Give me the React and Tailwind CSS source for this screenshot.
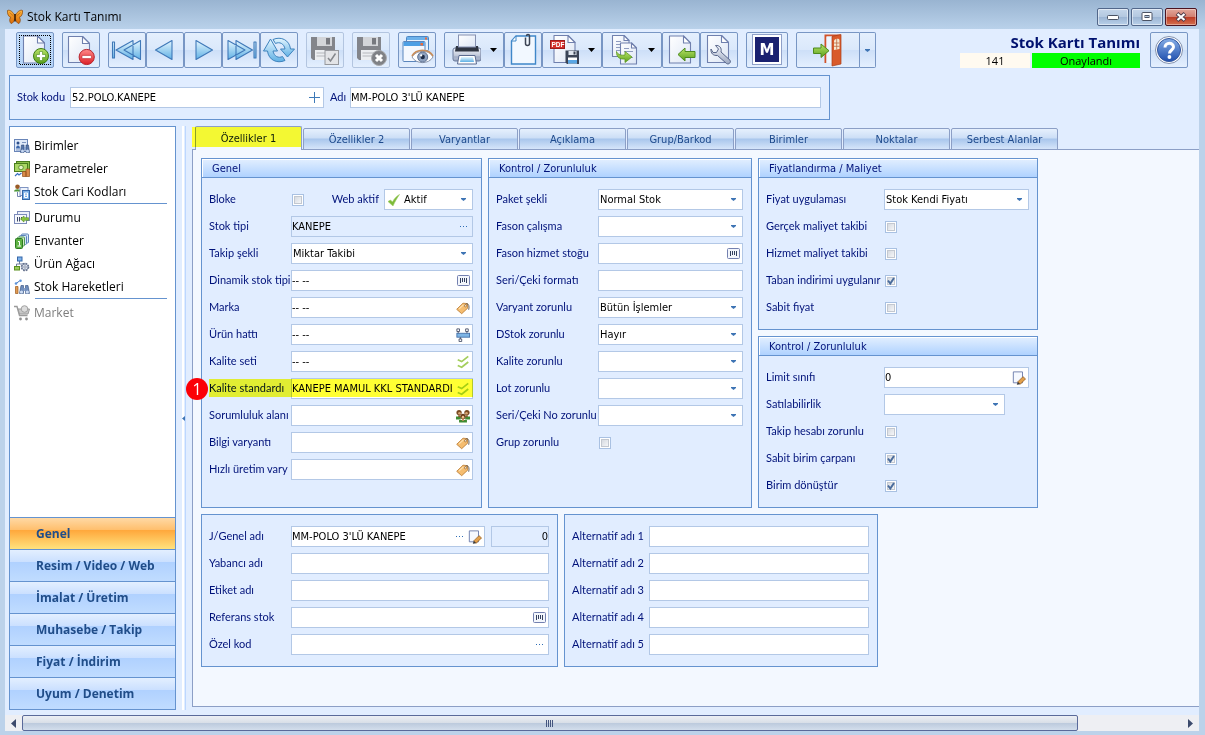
import React, { useId, useState } from 'react';

const tabs = [
  'Özellikler 1',
  'Özellikler 2',
  'Varyantlar',
  'Açıklama',
  'Grup/Barkod',
  'Birimler',
  'Noktalar',
  'Serbest Alanlar',
];

const sections = [
  'Genel',
  'Resim / Video / Web',
  'İmalat / Üretim',
  'Muhasebe / Takip',
  'Fiyat / İndirim',
  'Uyum / Denetim',
];

/* ---------- toolbar drawings ---------- */

const Gradients = () => (
  <svg width="0" height="0" className="absolute" aria-hidden="true">
    <defs>
      <linearGradient id="page" x1="0" y1="0" x2="1" y2="1">
        <stop offset="0" stopColor="#ffffff" />
        <stop offset="1" stopColor="#dde6f5" />
      </linearGradient>
      <linearGradient id="sky" x1="0" y1="0" x2="0" y2="1">
        <stop offset="0" stopColor="#e4f6ff" />
        <stop offset="1" stopColor="#5fb0e4" />
      </linearGradient>
      <linearGradient id="green" x1="0" y1="0" x2="0" y2="1">
        <stop offset="0" stopColor="#b9e468" />
        <stop offset="1" stopColor="#5aa01c" />
      </linearGradient>
      <linearGradient id="red" x1="0" y1="0" x2="0" y2="1">
        <stop offset="0" stopColor="#ff8a8a" />
        <stop offset="1" stopColor="#dc1f27" />
      </linearGradient>
      <linearGradient id="steel" x1="0" y1="0" x2="0" y2="1">
        <stop offset="0" stopColor="#f4f6fb" />
        <stop offset="1" stopColor="#9aa6c0" />
      </linearGradient>
      <linearGradient id="help" x1="0" y1="0" x2="0" y2="1">
        <stop offset="0" stopColor="#86aee6" />
        <stop offset="1" stopColor="#1f4fae" />
      </linearGradient>
      <linearGradient id="wing" x1="0" y1="0" x2="0" y2="1">
        <stop offset="0" stopColor="#ffb43a" />
        <stop offset="1" stopColor="#d96a07" />
      </linearGradient>
    </defs>
  </svg>
);

const Art = ({ w = 36, children }) => (
  <svg width={w} height="34" viewBox={`1 1 ${w} 34`} className="block shrink-0" aria-hidden="true">
    {children}
  </svg>
);

const Page = ({ x, y, w, h, stroke = '#7080ae', fold = 7 }) => (
  <g stroke={stroke} strokeWidth="1.1" strokeLinejoin="round">
    <path d={`M${x} ${y}H${x + w - fold}L${x + w} ${y + fold}V${y + h}H${x}Z`} fill="url(#page)" />
    <path d={`M${x + w - fold} ${y}V${y + fold}H${x + w}Z`} fill="#fff" />
  </g>
);

const NewIcon = () => (
  <Art>
    <Page x={7.5} y={4} w={21} h={27} />
    <circle cx="25" cy="24" r="7.5" fill="url(#green)" stroke="#3d7d12" />
    <path d="M23.500 19.500h3v3h3v3h-3v3h-3v-3h-3v-3h3z" fill="#fff" stroke="#4c8c1c" strokeWidth=".6" />
    <rect x="3.500" y="3.500" width="31" height="29" fill="none" stroke="#000" strokeDasharray="1 1" strokeDashoffset=".5" shapeRendering="crispEdges" />
  </Art>
);

const DeleteIcon = () => (
  <Art>
    <Page x={6.5} y={4.5} w={21} h={26} />
    <circle cx="24.700" cy="25" r="7.600" fill="url(#red)" stroke="#b8232b" />
    <rect x="20" y="23.400" width="9.400" height="3.200" rx=".6" fill="#fff" stroke="#b8232b" strokeWidth=".6" />
  </Art>
);

const NavIcon = ({ d }) => (
  <Art>
    <path d={d} fill="url(#sky)" stroke="#3f78b8" strokeWidth="1.1" strokeLinejoin="round" />
  </Art>
);

const RefreshIcon = () => (
  <Art>
    <g fill="url(#sky)" stroke="#3f83bd" strokeWidth="1" strokeLinejoin="round">
      <path d="M13 7.500C21 4 29.500 8 30.500 17H34.500L27.500 25L20.500 17H25C24 11.500 19.500 9.500 15.500 11.500Z" />
      <path d="M25 28.500C17 32 8.500 28 7.500 19H3.500L10.500 7L17.500 19H13C14 24.500 18.500 26.500 22.500 24.500Z" />
    </g>
  </Art>
);

const Disk = () => (
  <g>
    <path d="M5 5H29V28H7L5 26Z" fill="#83858b" />
    <path d="M11 5H26V14H11Z" fill="#d3d5d9" />
    <path d="M20 6H24V12.500H20Z" fill="#77797f" />
    <path d="M9 18H26V28H9Z" fill="#eceef1" />
    <path d="M10.500 21H24M10.500 24H24" stroke="#b5b7bc" />
  </g>
);

const SaveIcon = () => (
  <Art>
    <Disk />
    <rect x="19" y="18.500" width="13.500" height="14" fill="#e3e4e7" stroke="#96989d" />
    <path d="M22 26L24.500 29L29.500 21.500" fill="none" stroke="#85878c" strokeWidth="1.500" />
  </Art>
);

const SaveCloseIcon = () => (
  <Art>
    <Disk />
    <circle cx="27" cy="26" r="7.500" fill="#7f8186" stroke="#a9abaf" />
    <path d="M24 23L30 29M30 23L24 29" stroke="#fff" strokeWidth="3" />
  </Art>
);

const PreviewIcon = () => (
  <Art>
    <rect x="8.500" y="4.500" width="22" height="14" rx="1" fill="#e8f1fc" stroke="#4b86c4" />
    <rect x="9" y="5" width="21" height="3" fill="#6db1ea" />
    <rect x="27" y="5.500" width="2" height="2" fill="#ee6b3b" />
    <rect x="5" y="9.500" width="22" height="20" rx="1" fill="#f4f8fe" stroke="#5b86bc" />
    <rect x="5.500" y="10" width="21" height="4" fill="#4d9fe4" />
    <rect x="22.500" y="11" width="2.500" height="2.500" fill="#ee6b3b" />
    <path d="M14 25C18 18 31 17 35 25C31 32.500 18 32.500 14 25Z" fill="#fff" stroke="#8c98ae" />
    <path d="M14 24C18 16.500 31 16.500 35 24" fill="none" stroke="#c88d5a" strokeWidth="1.600" />
    <circle cx="24.700" cy="25" r="5" fill="#8fa2bf" stroke="#5c7092" />
    <circle cx="24.700" cy="25" r="2.200" fill="#1c2b46" />
    <circle cx="23.200" cy="23.400" r="1.100" fill="#fff" />
  </Art>
);

const PrintIcon = () => (
  <Art>
    <rect x="9" y="16" width="28" height="13" rx="2" fill="url(#steel)" stroke="#6a7a9c" />
    <path d="M12 14H34L35 19.500H11Z" fill="#2f3542" />
    <rect x="14.500" y="3" width="17" height="12" fill="url(#page)" stroke="#8590b0" />
    <path d="M9.500 25H36.500" stroke="#9aa6c0" />
    <path d="M15 23.500H31L32.500 32H13.500Z" fill="#fff" stroke="#5b6b90" />
    <path d="M17 25H29L30 30H16Z" fill="url(#sky)" />
  </Art>
);

const ClipIcon = () => (
  <Art>
    <path d="M12 4H31.500V32H7.500V9Z" fill="#f2f8ff" stroke="#3f87c9" strokeWidth="1.400" />
    <path d="M12 4V9H7.500Z" fill="#fff" stroke="#3f87c9" />
    <path d="M21.500 5.500V11.500A2 2 0 0 0 25.500 11.500V4A1.500 1.500 0 0 0 22.500 4" fill="none" stroke="#3c4454" strokeWidth="1.500" />
  </Art>
);

const PdfIcon = () => (
  <Art>
    <Page x={12} y={3.5} w={21} h={27} />
    <rect x="8.500" y="8.500" width="14" height="8" fill="#d5302b" stroke="#9c1c1c" />
    <text x="9.500" y="15.200" fontSize="6.500" fontWeight="bold" fill="#fff" fontFamily="Liberation Sans, sans-serif">
      PDF
    </text>
    <path d="M23.500 18.500H37V32H25L23.500 30.500Z" fill="#3b4456" />
    <path d="M26.500 19H34.500V23H26.500Z" fill="#dfe5ee" />
    <path d="M31.500 19.500H33.500V22.500H31.500Z" fill="#3b4456" />
    <path d="M26 25.500H35V31.500H26Z" fill="#fff" />
    <path d="M26 28H35V31.500H26Z" fill="#5aa6e4" />
  </Art>
);

const CopyIcon = () => (
  <Art>
    <Page x={10.5} y={3.5} w={16.5} h={21} fold={5} />
    <path d="M14 9.500H19M14 12.500H23M14 15.500H22M14 18.500H20" stroke="#8e9bbf" />
    <Page x={18.5} y={11} w={16} h={21} fold={5} />
    <path d="M22 16.500H27M22 19.500H31M22 25.500H31" stroke="#8e9bbf" />
    <path d="M14.500 19.500C16 23 19 23.500 23 23V19.500L30 25L23 30.500V27C17 27.500 14.500 25 14.500 19.500Z" fill="url(#green)" stroke="#5b9720" strokeWidth=".8" />
  </Art>
);

const ImportIcon = () => (
  <Art>
    <Page x={7.5} y={4} w={21} h={27} />
    <path d="M16 22.500L23 16V19.500H33V25.500H23V29Z" fill="url(#green)" stroke="#4d8a1d" />
  </Art>
);

const ToolIcon = () => (
  <Art>
    <Page x={7.5} y={3.5} w={21} h={27} />
    <path
      d="M11 17C10.500 21 13 24 17.500 23.500L26.500 31.500C28.500 33 31.500 30.500 30 28.200L21 20C22 16 19.500 13 15.500 13.500L18.500 17L16.500 20.500L13 20.500Z"
      fill="url(#steel)"
      stroke="#58668a"
      strokeLinejoin="round"
    />
  </Art>
);

const MIcon = () => (
  <Art w={40}>
    <rect x="6.500" y="2.500" width="29" height="30" fill="#fff" stroke="#8fa0c8" />
    <rect x="9" y="5" width="24" height="25" fill="#1a2170" />
    <text x="21" y="23" fontSize="15" fontWeight="900" textAnchor="middle" fill="#fff" fontFamily="DejaVu Sans, sans-serif">
      M
    </text>
  </Art>
);

const ExitIcon = () => (
  <Art w={62}>
    <path d="M29.500 31V3.500H44" fill="none" stroke="#d2522a" strokeWidth="2" />
    <path d="M30.500 4.500H36V31H30.500Z" fill="#eef5ff" />
    <path d="M36 4.500L45 2.500V32L36 34Z" fill="#d95a2b" stroke="#a93c16" strokeWidth=".7" />
    <path d="M38 9C38.500 6.500 43 6 43.500 8V17L38 18Z" fill="#f6e7d0" />
    <path d="M40.700 7V17.500M38 11H43.500M38 14.300H43.500" stroke="#bb6a43" strokeWidth=".8" />
    <path d="M17.500 16H25V12L33 18.700L25 25.500V21.500H17.500Z" fill="url(#green)" stroke="#4d8a1d" />
  </Art>
);

const HelpIcon = () => (
  <Art>
    <circle cx="19" cy="18" r="13.500" fill="#fff" stroke="#8391ad" />
    <circle cx="19" cy="18" r="11.500" fill="url(#help)" stroke="#32569f" />
    <path d="M15 15.500C15 10 23.500 10 23.500 15C23.500 18 19.500 18 19.500 21.500" fill="none" stroke="#fff" strokeWidth="3" />
    <circle cx="19.400" cy="25" r="1.900" fill="#fff" />
  </Art>
);

/* ---------- small drawings ---------- */

const Small = ({ size = 16, children }) => (
  <svg width={size} height={size} viewBox="0 0 16 16" className="block shrink-0" aria-hidden="true">
    {children}
  </svg>
);

const Butterfly = () => (
  <svg width="16" height="16" viewBox="0 0 16 16" className="block" aria-hidden="true">
    <path
      d="M7.500 6C5.500 2 2 .5.500 1.500C0 4.500 1.500 8 4 8.500C2 9.500 2.500 13 4 14.500C6 14.500 7 12 7.500 10.500L8.500 10.500C9 12 10 14.500 12 14.500C13.500 13 14 9.500 12 8.500C14.500 8 16 4.500 15.500 1.500C14 .5 10.500 2 8.500 6Z"
      fill="url(#wing)"
      stroke="#8a4507"
      strokeWidth=".7"
    />
    <path d="M8 5V12.500" stroke="#3a1c04" strokeWidth="1.600" />
    <path d="M2.500 3.500L6.500 7M13.500 3.500L9.500 7" stroke="#a65a12" strokeWidth=".6" />
  </svg>
);

const BarcodeIcon = () => (
  <svg width="13" height="11" viewBox="0 0 13 11" className="block" aria-hidden="true">
    <rect x=".5" y=".5" width="12" height="10" rx="1" fill="#f3f6fc" stroke="#7481b0" />
    <path d="M3.500 3V8M5.500 3V7M7.500 3V7M9.500 3V8" stroke="#33405e" />
  </svg>
);

const TagIcon = () => (
  <Small size={14}>
    <path d="M.8 9.500L8 2.500L13 3L13.500 8L6.500 14.500Z" fill="#f5bd70" stroke="#b8752a" strokeWidth=".9" />
    <path d="M3.500 9L8.500 4.500" stroke="#fde3b4" strokeWidth="1.300" />
    <circle cx="10.800" cy="5.500" r="1.200" fill="#fff" stroke="#8a5518" strokeWidth=".7" />
    <path d="M11 4C13 1.500 16 4.500 14.500 10" fill="none" stroke="#55504c" />
  </Small>
);

const LineIcon = () => (
  <Small size={14}>
    <rect x="1" y="6" width="14.500" height="4.500" fill="#7db4e4" stroke="#416fa8" />
    <path d="M2.500 3V6M12.500 3V6M5 10.500V13" stroke="#454d66" />
    <path d="M1 1H4V4H1ZM11 1H14V4H11ZM3.500 12.500H6.500V15.500H3.500Z" fill="#fff" stroke="#454d66" />
  </Small>
);

const ChecksIcon = () => (
  <Small size={14}>
    <path d="M2 5.500L6.500 7.500L14 1.500M2 12L6.500 14L14 8" fill="none" stroke="#a4ce5c" strokeWidth="2" />
  </Small>
);

const PeopleIcon = () => (
  <Small size={14}>
    <path d="M0 8.500H5.500V12H0ZM10.500 8.500H16V12H10.500ZM3.500 12.500H12.500V15.500H3.500Z" fill="#3f8b32" />
    <circle cx="3.500" cy="4" r="3" fill="#7a4a22" />
    <circle cx="12.500" cy="4" r="3" fill="#7a4a22" />
    <path d="M2.500 7H5V9H2.500ZM11 7H13.500V9H11Z" fill="#8a5a30" />
    <circle cx="8" cy="8.500" r="3" fill="#6b3c18" />
    <path d="M6.800 11H9.200V13.500H6.800Z" fill="#c98f5c" />
    <circle cx="4" cy="4.800" r="1.500" fill="#d9a674" />
    <circle cx="12" cy="4.800" r="1.500" fill="#d9a674" />
    <circle cx="8" cy="9.300" r="1.500" fill="#edbf8e" />
  </Small>
);

const EditIcon = () => (
  <Small size={14}>
    <path d="M1.500 1H12V13.500H1.500Z" fill="#f6f9ff" stroke="#6576a8" />
    <path d="M6.500 12.500L12.500 6.500L15.500 9L9.500 15Z" fill="#e2a04c" stroke="#8e5619" strokeWidth=".8" />
    <path d="M6.500 12.500L9.500 15L5.500 15.800Z" fill="#3a3a3a" />
  </Small>
);

const DotsIcon = () => (
  <svg width="9" height="2" viewBox="0 0 9 2" className="block" aria-hidden="true">
    <path d="M1 0H2V1H1ZM4 0H5V1H4ZM7 0H8V1H7Z" fill="#2f6db5" />
  </svg>
);

const UnitsIcon = () => (
  <Small>
    <rect x=".5" y="1.500" width="13" height="12" fill="#dfe9f8" stroke="#6985b8" />
    <circle cx="4" cy="5" r="1.500" fill="#2d4f8a" />
    <path d="M2 10.500C2 6.500 6 6.500 6 10.500Z" fill="#3c66aa" />
    <path d="M8 4.500H12M2 12H6" stroke="#7d95c0" />
    <path d="M7.500 7H10V14.500H6.500ZM12 7H14.500L15.500 14.500H12Z" fill="#5877aa" stroke="#2f4a7a" strokeWidth=".6" />
    <path d="M10 9H12V12H10Z" fill="#8aa3cd" />
    <circle cx="8.500" cy="13" r="1.500" fill="#c6d7f2" />
    <circle cx="13.500" cy="13" r="1.500" fill="#c6d7f2" />
  </Small>
);

const MoneyIcon = () => (
  <Small>
    <rect x="2.500" y=".5" width="13" height="8" fill="#8cc04a" stroke="#4a7d1d" />
    <rect x=".5" y="2.500" width="13" height="8" fill="#a9d663" stroke="#4a7d1d" />
    <circle cx="7" cy="6.500" r="2.300" fill="#e4f3c6" stroke="#4a7d1d" strokeWidth=".8" />
    <path d="M1 15L3.500 12.500L5 14L7.500 12" fill="none" stroke="#3a6fc0" strokeWidth="1.200" />
    <path d="M8.500 10.500H12V15.500H8.500ZM12 8H15.500V15.500H12Z" fill="#d98b4a" stroke="#94501b" strokeWidth=".7" />
  </Small>
);

const CodesIcon = () => (
  <Small>
    <circle cx="3.500" cy="2.800" r="2.300" fill="#9a5b26" />
    <path d="M0 7.500C0 4.500 7 4.500 7 7.500Z" fill="#4d9738" />
    <path d="M3.500 8V12.500H7" fill="none" stroke="#7485b0" />
    <rect x="6" y="3.500" width="8" height="8" fill="#eef3fc" stroke="#7f94c2" />
    <rect x="8.500" y="6.500" width="7" height="9" fill="#7aaee6" stroke="#3467a8" />
    <path d="M10.500 9H13.500V13.500H10.500ZM10.500 11.200H13.500" fill="none" stroke="#fff" />
  </Small>
);

const StatusIcon = () => (
  <Small>
    <rect x="3.500" y="1.500" width="12" height="9" fill="#eef2fb" stroke="#7d8cba" />
    <rect x=".5" y="4.500" width="12" height="9" fill="#f6f8fd" stroke="#7d8cba" />
    <path d="M3.500 7V11.500M5.500 7V11.500M7.500 7V10" stroke="#3f4a66" />
    <path d="M6.500 9L10 6V7.700H14.500V10.300H10V12Z" fill="#8cc63f" stroke="#568f1b" strokeWidth=".6" />
  </Small>
);

const InventoryIcon = () => (
  <Small>
    <rect x="7.500" y="1" width="7" height="9" rx="1" fill="#d8e6f8" stroke="#5b83ba" />
    <rect x="5.500" y="2.500" width="7" height="9" rx="1" fill="#d8e6f8" stroke="#5b83ba" />
    <rect x="3.500" y="4" width="7" height="9" rx="1" fill="#d4ecc0" stroke="#4f9a58" />
    <rect x="1.500" y="5.500" width="7" height="10" rx="1" fill="#5fb344" stroke="#2c7a20" />
    <path d="M4 8.500H5.500V12.500M3.500 13H7" fill="none" stroke="#fff" />
  </Small>
);

const TreeIcon = () => (
  <Small>
    <path d="M5.500 5V8M2.500 11V8H11" fill="none" stroke="#6c7a9c" />
    <rect x="3.500" y="1" width="4.500" height="4" fill="#7fb2ea" stroke="#3566a8" />
    <rect x=".5" y="10.500" width="5" height="3.500" fill="#9ccc5a" stroke="#5a8f1f" />
    <circle cx="11" cy="11" r="3.300" fill="#cdd4e2" stroke="#66728e" strokeDasharray="1.600 1" strokeWidth="2" />
    <circle cx="11" cy="11" r="3" fill="#dde2ed" stroke="#66728e" strokeWidth=".7" />
    <circle cx="11" cy="11" r="1.200" fill="#fff" stroke="#66728e" strokeWidth=".7" />
  </Small>
);

const MovesIcon = () => (
  <Small>
    <path d="M2 4.500L5.500 2" fill="none" stroke="#4a7cc0" />
    <circle cx="2" cy="4.500" r="1.300" fill="#5c93da" />
    <circle cx="6.500" cy="1.800" r="1.300" fill="#5c93da" />
    <path d="M1.500 7.500H4V14.500H1.500Z" fill="#e09a52" stroke="#9c5a1b" strokeWidth=".7" />
    <path d="M7 6.500H9.500V14.500H5.500ZM11.500 6.500H14L15.500 14.500H11.500Z" fill="#6e8dbd" stroke="#2f4a7a" strokeWidth=".6" />
    <path d="M9.500 9H11.500V12H9.500Z" fill="#8aa3cd" />
    <circle cx="7.500" cy="13" r="1.600" fill="#cfdef5" />
    <circle cx="13.300" cy="13" r="1.600" fill="#cfdef5" />
  </Small>
);

const CartIcon = () => (
  <Small>
    <path d="M0 1.500H3L5.500 10.500H13.500" fill="none" stroke="#9b9b9b" strokeWidth="1.400" />
    <path d="M4 4H15.500L14 9H5.500Z" fill="#c9c9c9" stroke="#9b9b9b" />
    <circle cx="10.500" cy="4" r="3.300" fill="#dcdcdc" stroke="#a2a2a2" />
    <circle cx="6.500" cy="14" r="1.400" fill="#8f8f8f" />
    <circle cx="12.500" cy="14" r="1.400" fill="#8f8f8f" />
  </Small>
);

/* ---------- controls ---------- */

const ToolButton = ({ label, children, focused = false, disabled = false, className = '' }) => (
  <button
    type="button"
    aria-label={label}
    disabled={disabled}
    className={`flex h-9 shrink-0 items-center rounded-xs border ${
      disabled ? 'border-[#b3c5e0]' : 'border-[#7896c4]'
    } ${
      focused
        ? 'bg-linear-to-b from-[#c3dcfa] to-[#b4d3f8]'
        : 'bg-[linear-gradient(#e4effd_0%,#dae8fb_50%,#cddff8_51%,#e4effe_100%)]'
    } ${className}`}
  >
    {children}
  </button>
);

const DropMark = () => (
  <svg width="7" height="4" viewBox="0 0 7 4" className="ml-[9px] block shrink-0" aria-hidden="true">
    <path d="M0 0H7L3.500 4Z" fill="#000" />
  </svg>
);

const Caret = ({ className = '' }) => (
  <svg width="5" height="3" viewBox="0 0 5 3" className={`block ${className}`} aria-hidden="true">
    <path d="M0 0H5V1L2.500 3L0 1Z" fill="#3e74b4" />
  </svg>
);

const Row = ({ label, id, labelWidth, children }) => (
  <div className="flex h-[27px] items-center">
    <label htmlFor={id} className={`shrink-0 font-[Lato,sans-serif] whitespace-nowrap text-[#00127a] ${labelWidth}`}>
      {label}
    </label>
    {children}
  </div>
);

const TextBox = ({ id, value = '', readOnly = false, className = 'flex-1', align = 'text-left', icons = [], label }) => (
  <div
    className={`flex h-[21px] min-w-0 items-center border border-[#b3c8e6] ${
      readOnly ? 'bg-[#e1edff]' : 'bg-white'
    } ${className}`}
  >
    <input
      id={id}
      type="text"
      aria-label={label}
      defaultValue={value}
      readOnly={readOnly}
      className={`h-full w-full min-w-0 bg-transparent text-black outline-none ${align}`}
    />
    {icons.map((Icon, i) => (
      <button
        key={i}
        type="button"
        aria-label="Seç"
        className="flex h-full w-4 shrink-0 items-center justify-center last:mr-px"
      >
        <Icon />
      </button>
    ))}
  </div>
);

const SelectBox = ({ id, value = '', className = 'flex-1', icon = null }) => (
  <div className={`relative flex h-[21px] min-w-0 items-center border border-[#b3c8e6] bg-white ${className}`}>
    {icon}
    <select id={id} defaultValue={value} className="h-full w-full appearance-none bg-transparent px-px pt-px text-black outline-none">
      <option value={value}>{value}</option>
    </select>
    <Caret className="pointer-events-none absolute right-[6px]" />
  </div>
);

const CheckBox = ({ id, checked = false }) => (
  <span className="relative ml-px block size-3">
    <input
      id={id}
      type="checkbox"
      defaultChecked={checked}
      className="peer block size-3 appearance-none border border-[#a9c1e2] bg-linear-to-br from-[#cdd2da] to-white shadow-[inset_0_0_0_1px_#fff,inset_0_0_0_2px_#c3c8d0]"
    />
    <svg
      width="12"
      height="12"
      viewBox="0 0 12 12"
      className="pointer-events-none absolute inset-0 hidden peer-checked:block"
      aria-hidden="true"
    >
      <path d="M3 5.500L5.300 8.500L9 3" fill="none" stroke="#4a6c9c" strokeWidth="2" />
    </svg>
  </span>
);

const TextRow = ({ label, labelWidth, ...rest }) => {
  const id = useId();
  return (
    <Row label={label} id={id} labelWidth={labelWidth}>
      <TextBox id={id} {...rest} />
    </Row>
  );
};

const SelectRow = ({ label, labelWidth, ...rest }) => {
  const id = useId();
  return (
    <Row label={label} id={id} labelWidth={labelWidth}>
      <SelectBox id={id} {...rest} />
    </Row>
  );
};

const CheckRow = ({ label, labelWidth, checked }) => {
  const id = useId();
  return (
    <Row label={label} id={id} labelWidth={labelWidth}>
      <CheckBox id={id} checked={checked} />
    </Row>
  );
};

const Group = ({ title, className = '', children }) => (
  <section className={`border border-[#6593cf] bg-[#e1edff] ${className}`}>
    {title && (
      <h2 className="h-[19px] border-b border-[#6593cf] bg-linear-to-b from-[#e3efff] to-[#afd2ff] pt-px pl-[10px] leading-[18px] text-[#00127a] shadow-[inset_1px_1px_0_#fff]">
        {title}
      </h2>
    )}
    <div className="px-2 py-2 pl-[7px]">{children}</div>
  </section>
);

const SideItem = ({ icon: Icon, children, disabled = false }) => (
  <li>
    <a
      href="#"
      className={`flex h-[23px] items-center gap-1 pl-1 font-['Open_Sans',sans-serif] text-[12px] ${
        disabled ? 'text-[#7d7d7d]' : 'text-black'
      }`}
    >
      <Icon />
      {children}
    </a>
  </li>
);

const SideLine = () => <li className="mr-2 ml-[25px] h-[3px] border-t border-[#6593cf]" />;

const App = () => {
  const [activeTab, setActiveTab] = useState(0);
  const [activeSection, setActiveSection] = useState(0);
  const webId = useId();
  const blokeId = useId();
  const nameId = useId();
  const codeId = useId();
  const titleId = useId();

  return (
    <div className="flex min-h-screen flex-col overflow-hidden bg-[#bcd2ea] font-['DejaVu_Sans_Condensed',sans-serif] text-[11px] text-black">
      <Gradients />

      {/* Title bar */}
      <header className="flex h-[29px] items-end justify-between bg-linear-to-b from-[#99b4d1] to-[#b9d1ea] pr-2 pl-[7px]">
        <div className="flex h-6 items-center gap-1 font-['Open_Sans',sans-serif] text-[12px]">
          <Butterfly />
          <span>Stok Kartı Tanımı</span>
        </div>
        <div className="mb-[3px] flex gap-0.5">
          <button
            type="button"
            aria-label="Küçült"
            className="flex h-[18px] w-8 items-center justify-center rounded-xs border border-[#52678a] bg-[linear-gradient(#c5d6ea_0%,#b3c8e0_49%,#9bb4d3_50%,#b9d0e9_100%)] shadow-[inset_0_0_0_1px_#ffffff80]"
          >
            <svg width="12" height="6" viewBox="0 0 12 6" aria-hidden="true">
              <rect x=".5" y="1.500" width="11" height="4" rx="1" fill="#fff" stroke="#4b5364" />
            </svg>
          </button>
          <button
            type="button"
            aria-label="Ekranı kapla"
            className="flex h-[18px] w-8 items-center justify-center rounded-xs border border-[#52678a] bg-[linear-gradient(#c5d6ea_0%,#b3c8e0_49%,#9bb4d3_50%,#b9d0e9_100%)] shadow-[inset_0_0_0_1px_#ffffff80]"
          >
            <svg width="12" height="10" viewBox="0 0 12 10" aria-hidden="true">
              <rect x="1" y=".5" width="10" height="8" rx="1" fill="#fff" stroke="#4b5364" />
              <rect x="4" y="3.500" width="4" height="2" fill="#b3c8e0" stroke="#4b5364" />
            </svg>
          </button>
          <button
            type="button"
            aria-label="Kapat"
            className="flex h-[18px] w-8 items-center justify-center rounded-xs border border-[#4c1420] bg-[linear-gradient(#e2a79b_0%,#d27f70_49%,#bb3a24_50%,#d5704f_100%)] shadow-[inset_0_0_0_1px_#ffffff60]"
          >
            <svg width="12" height="10" viewBox="0 0 12 10" aria-hidden="true">
              <path d="M2 1.500L10 8.500M10 1.500L2 8.500" stroke="#4f3b48" strokeWidth="4" />
              <path d="M2.500 2L9.500 8M9.500 2L2.500 8" stroke="#fff" strokeWidth="2.200" />
            </svg>
          </button>
        </div>
      </header>

      <div className="mr-1.5 mb-1 ml-[5px] flex flex-1 flex-col bg-[#e1edff]">
        {/* Toolbar */}
        <div className="flex items-start justify-between pt-[3px] pr-[11px] pl-[11px]">
          <div className="flex gap-2">
            <ToolButton label="Yeni" focused>
              <NewIcon />
            </ToolButton>
            <ToolButton label="Sil">
              <DeleteIcon />
            </ToolButton>
            <div className="flex">
              <ToolButton label="İlk">
                <NavIcon d="M4.500 10H6.500V26H4.500ZM8 18L25 8.500V27.500ZM16 18L32.500 8.500V27.500Z" />
              </ToolButton>
              <ToolButton label="Önceki">
                <NavIcon d="M9.500 18L26 8.500V27.500Z" />
              </ToolButton>
              <ToolButton label="Sonraki">
                <NavIcon d="M28.500 18L12 8.500V27.500Z" />
              </ToolButton>
              <ToolButton label="Son">
                <NavIcon d="M23 18L6 8.500V27.500ZM30.500 18L14 8.500V27.500ZM32 10H34V26H32Z" />
              </ToolButton>
              <ToolButton label="Yenile">
                <RefreshIcon />
              </ToolButton>
            </div>
            <ToolButton label="Kaydet" disabled>
              <SaveIcon />
            </ToolButton>
            <ToolButton label="Kaydet ve kapat" disabled>
              <SaveCloseIcon />
            </ToolButton>
            <ToolButton label="Önizle">
              <PreviewIcon />
            </ToolButton>
            <div className="flex">
              <ToolButton label="Yazdır" className="w-[60px]">
                <PrintIcon />
                <DropMark />
              </ToolButton>
              <ToolButton label="Ekler">
                <ClipIcon />
              </ToolButton>
              <ToolButton label="PDF kaydet" className="w-[60px]">
                <PdfIcon />
                <DropMark />
              </ToolButton>
              <ToolButton label="Kopyala" className="w-[60px]">
                <CopyIcon />
                <DropMark />
              </ToolButton>
              <ToolButton label="Aktar">
                <ImportIcon />
              </ToolButton>
              <ToolButton label="Araçlar">
                <ToolIcon />
              </ToolButton>
            </div>
            <ToolButton label="M">
              <MIcon />
            </ToolButton>
            <div className="flex">
              <ToolButton label="Çıkış" className="rounded-r-none">
                <ExitIcon />
              </ToolButton>
              <ToolButton label="Çıkış seçenekleri" className="w-4 justify-center rounded-l-none border-l-0">
                <Caret />
              </ToolButton>
            </div>
          </div>

          <div className="flex gap-2.5">
            <div className="text-right">
              <h1 className="h-[21px] font-['Open_Sans',sans-serif] text-[15px] leading-[21px] font-bold text-[#00116f]">
                Stok Kartı Tanımı
              </h1>
              <div className="flex gap-0.5 text-center font-['Open_Sans',sans-serif] text-[11px] leading-[15px]">
                <span className="w-[70px] bg-[#fffaf0]">141</span>
                <span className="w-[108px] bg-[#00ff00]">Onaylandı</span>
              </div>
            </div>
            <ToolButton label="Yardım">
              <HelpIcon />
            </ToolButton>
          </div>
        </div>

        {/* Code and name */}
        <div className="mt-[7px] ml-1 flex h-[45px] w-[821px] items-center border border-[#6593cf] pr-2 pl-[7px]">
          <label htmlFor={codeId} className="w-[53px] font-[Lato,sans-serif] text-[#00127a]">
            Stok kodu
          </label>
          <div className="flex h-[21px] w-[254px] items-center border border-[#b3c8e6] bg-white">
            <input id={codeId} type="text" defaultValue="52.POLO.KANEPE" className="h-full w-full min-w-0 px-px outline-none" />
            <button type="button" aria-label="Ekle" className="flex w-[17px] shrink-0 justify-center">
              <svg width="11" height="11" viewBox="0 0 11 11" aria-hidden="true">
                <path d="M5.500 0V11M0 5.500H11" stroke="#3e7ab8" />
              </svg>
            </button>
          </div>
          <label htmlFor={titleId} className="w-[26px] pl-1.5 font-[Lato,sans-serif] text-[#00127a]">
            Adı
          </label>
          <TextBox id={titleId} value="MM-POLO 3'LÜ KANEPE" />
        </div>

        <div className="mt-1.5 flex flex-1 pl-1">
          {/* Sidebar */}
          <nav className="flex w-[167px] shrink-0 flex-col justify-between border border-[#6593cf] bg-white">
            <ul className="pt-[7px]">
              <SideItem icon={UnitsIcon}>Birimler</SideItem>
              <SideItem icon={MoneyIcon}>Parametreler</SideItem>
              <SideItem icon={CodesIcon}>Stok Cari Kodları</SideItem>
              <SideLine />
              <SideItem icon={StatusIcon}>Durumu</SideItem>
              <SideItem icon={InventoryIcon}>Envanter</SideItem>
              <SideItem icon={TreeIcon}>Ürün Ağacı</SideItem>
              <SideItem icon={MovesIcon}>Stok Hareketleri</SideItem>
              <SideLine />
              <SideItem icon={CartIcon} disabled>
                Market
              </SideItem>
            </ul>
            <div>
              {sections.map((section, i) => (
                <button
                  key={section}
                  type="button"
                  onClick={() => setActiveSection(i)}
                  className={`block h-8 w-full border-t border-[#6593cf] pl-[26px] text-left font-['Open_Sans',sans-serif] text-[12px] font-bold text-[#204d89] ${
                    activeSection === i
                      ? 'bg-[linear-gradient(#ffd9a5_0%,#ffbf6d_38%,#ffa83c_40%,#ffe27d_100%)]'
                      : 'bg-[linear-gradient(#e3efff_0%,#cbe0ff_38%,#b0d1ff_40%,#c0dcff_100%)]'
                  }`}
                >
                  {section}
                </button>
              ))}
            </div>
          </nav>

          {/* Splitter */}
          <div className="mx-1.5 flex w-1 shrink-0 items-center border-r border-l-2 border-r-[#bcd7ff] border-l-white">
            <svg width="3" height="5" viewBox="0 0 3 5" className="-ml-0.5 shrink-0" aria-hidden="true">
              <path d="M3 0V5L0 2.500Z" fill="#3e74b4" />
            </svg>
          </div>

          {/* Tabs */}
          <div className="mb-[3px] flex min-w-0 flex-1 flex-col">
            <div role="tablist" className="flex h-6 items-end gap-px pl-[3px]">
              {tabs.map((tab, i) => (
                <button
                  key={tab}
                  type="button"
                  role="tab"
                  aria-selected={activeTab === i}
                  onClick={() => setActiveTab(i)}
                  className={`relative w-[107px] rounded-t-xs border border-[#8c9fc6] pt-0.5 ${
                    activeTab === i
                      ? 'z-10 h-6 border-b-0 bg-[#f3f8ff] text-[#0c1c30]'
                      : 'h-[22px] bg-[linear-gradient(#e6f0fd_0%,#ccdef6_45%,#a9c6ec_50%,#d6e5fa_100%)] text-[#1e4a8c]'
                  }`}
                >
                  {tab}
                  {i === 0 && (
                    <span className="pointer-events-none absolute top-0 right-0 bottom-[3px] -left-1 bg-[#ffff33] mix-blend-multiply" />
                  )}
                </button>
              ))}
            </div>

            <div className="-mt-px flex flex-1 flex-col gap-1.5 border border-r-0 border-[#8c9fc6] bg-[#f3f8ff] pt-2 pl-2">
              <div className="flex gap-1.5">
                <Group title="Genel" className="w-[281px]">
                  <div className="flex h-[27px] items-center font-[Lato,sans-serif]">
                    <label htmlFor={blokeId} className="w-[82px] text-[#00127a]">
                      Bloke
                    </label>
                    <CheckBox id={blokeId} />
                    <label htmlFor={webId} className="flex-1 pr-[5px] text-right text-[#00127a]">
                      Web aktif
                    </label>
                    <SelectBox
                      id={webId}
                      value="Aktif"
                      className="w-[89px] font-['DejaVu_Sans_Condensed',sans-serif]"
                      icon={
                        <svg width="12" height="12" viewBox="0 0 12 12" className="mx-[3px] shrink-0" aria-hidden="true">
                          <path d="M0 7.500L2.500 6L4.500 8C6 5 8.500 2 11.500.500C9 4 7 7.500 5 12Z" fill="#7dbb3a" stroke="#9ac95f" strokeWidth=".6" />
                        </svg>
                      }
                    />
                  </div>
                  <TextRow label="Stok tipi" labelWidth="w-[82px]" value="KANEPE" readOnly icons={[DotsIcon]} />
                  <SelectRow label="Takip şekli" labelWidth="w-[82px]" value="Miktar Takibi" />
                  <TextRow label="Dinamik stok tipi" labelWidth="w-[82px]" value="-- --" icons={[BarcodeIcon]} />
                  <TextRow label="Marka" labelWidth="w-[82px]" value="-- --" icons={[TagIcon]} />
                  <TextRow label="Ürün hattı" labelWidth="w-[82px]" value="-- --" icons={[LineIcon]} />
                  <TextRow label="Kalite seti" labelWidth="w-[82px]" value="-- --" icons={[ChecksIcon]} />
                  <div className="relative">
                    <TextRow
                      label="Kalite standardı"
                      labelWidth="w-[82px]"
                      value="KANEPE MAMUL KKL STANDARDI"
                      icons={[ChecksIcon]}
                    />
                    <span className="pointer-events-none absolute inset-x-0 top-1 h-[18px] bg-[#ffff33] mix-blend-multiply" />
                    <span className="absolute top-[3px] -left-[23px] flex size-[22px] items-center justify-center rounded-full bg-[#fb0007] font-['Open_Sans',sans-serif] text-[16px] text-white">
                      1
                    </span>
                  </div>
                  <TextRow label="Sorumluluk alanı" labelWidth="w-[82px]" icons={[PeopleIcon]} />
                  <TextRow label="Bilgi varyantı" labelWidth="w-[82px]" icons={[TagIcon]} />
                  <TextRow label="Hızlı üretim vary" labelWidth="w-[82px]" icons={[TagIcon]} />
                </Group>

                <Group title="Kontrol / Zorunluluk" className="w-[264px]">
                  <SelectRow label="Paket şekli" labelWidth="w-[102px]" value="Normal Stok" />
                  <SelectRow label="Fason çalışma" labelWidth="w-[102px]" />
                  <TextRow label="Fason hizmet stoğu" labelWidth="w-[102px]" icons={[BarcodeIcon]} />
                  <TextRow label="Seri/Çeki formatı" labelWidth="w-[102px]" />
                  <SelectRow label="Varyant zorunlu" labelWidth="w-[102px]" value="Bütün İşlemler" />
                  <SelectRow label="DStok zorunlu" labelWidth="w-[102px]" value="Hayır" />
                  <SelectRow label="Kalite zorunlu" labelWidth="w-[102px]" />
                  <SelectRow label="Lot zorunlu" labelWidth="w-[102px]" />
                  <SelectRow label="Seri/Çeki No zorunlu" labelWidth="w-[102px]" />
                  <CheckRow label="Grup zorunlu" labelWidth="w-[102px]" />
                </Group>

                <div className="flex w-[280px] flex-col gap-1.5">
                  <Group title="Fiyatlandırma / Maliyet">
                    <SelectRow label="Fiyat uygulaması" labelWidth="w-[118px]" value="Stok Kendi Fiyatı" />
                    <CheckRow label="Gerçek maliyet takibi" labelWidth="w-[118px]" />
                    <CheckRow label="Hizmet maliyet takibi" labelWidth="w-[118px]" />
                    <CheckRow label="Taban indirimi uygulanır" labelWidth="w-[118px]" checked />
                    <CheckRow label="Sabit fiyat" labelWidth="w-[118px]" />
                  </Group>
                  <Group title="Kontrol / Zorunluluk">
                    <TextRow label="Limit sınıfı" labelWidth="w-[118px]" value="0" icons={[EditIcon]} />
                    <SelectRow label="Satılabilirlik" labelWidth="w-[118px]" className="w-[121px]" />
                    <CheckRow label="Takip hesabı zorunlu" labelWidth="w-[118px]" />
                    <CheckRow label="Sabit birim çarpanı" labelWidth="w-[118px]" checked />
                    <CheckRow label="Birim dönüştür" labelWidth="w-[118px]" checked />
                  </Group>
                </div>
              </div>

              <div className="flex gap-1.5">
                <Group className="w-[357px]">
                  <Row label="J/Genel adı" id={nameId} labelWidth="w-[82px]">
                    <TextBox id={nameId} value="MM-POLO 3'LÜ KANEPE" icons={[DotsIcon, EditIcon]} />
                    <TextBox value="0" label="Adet" readOnly align="text-right" className="ml-1.5 w-[58px]" />
                  </Row>
                  <TextRow label="Yabancı adı" labelWidth="w-[82px]" />
                  <TextRow label="Etiket adı" labelWidth="w-[82px]" />
                  <TextRow label="Referans stok" labelWidth="w-[82px]" icons={[BarcodeIcon]} />
                  <TextRow label="Özel kod" labelWidth="w-[82px]" icons={[DotsIcon]} />
                </Group>
                <Group className="w-[314px]">
                  {[1, 2, 3, 4, 5].map((n) => (
                    <TextRow key={n} label={`Alternatif adı ${n}`} labelWidth="w-[77px]" />
                  ))}
                </Group>
              </div>
            </div>
          </div>
        </div>

        {/* Horizontal scroll bar */}
        <div className="mt-[5px] flex h-4 items-center bg-[#eeeff3]">
          <button type="button" aria-label="Sola kaydır" className="flex h-4 w-[17px] items-center justify-center">
            <svg width="5" height="9" viewBox="0 0 5 9" aria-hidden="true">
              <path d="M5 0V9L0 4.500Z" fill="#3c4a6c" />
            </svg>
          </button>
          <div className="flex flex-1">
            <div className="flex h-4 w-[91%] items-center justify-center gap-px rounded-xs border border-[#5a6a9a] bg-[linear-gradient(#eceff4_0%,#d9dfe8_48%,#bccadd_52%,#d3deec_100%)]">
              <span className="h-[7px] w-px bg-[#44557f]" />
              <span className="h-[7px] w-px bg-[#44557f]" />
              <span className="h-[7px] w-px bg-[#44557f]" />
              <span className="h-[7px] w-px bg-[#44557f]" />
            </div>
          </div>
          <button type="button" aria-label="Sağa kaydır" className="flex h-4 w-[17px] items-center justify-center">
            <svg width="5" height="9" viewBox="0 0 5 9" aria-hidden="true">
              <path d="M0 0V9L5 4.500Z" fill="#3c4a6c" />
            </svg>
          </button>
        </div>
      </div>
    </div>
  );
};

export default App;
